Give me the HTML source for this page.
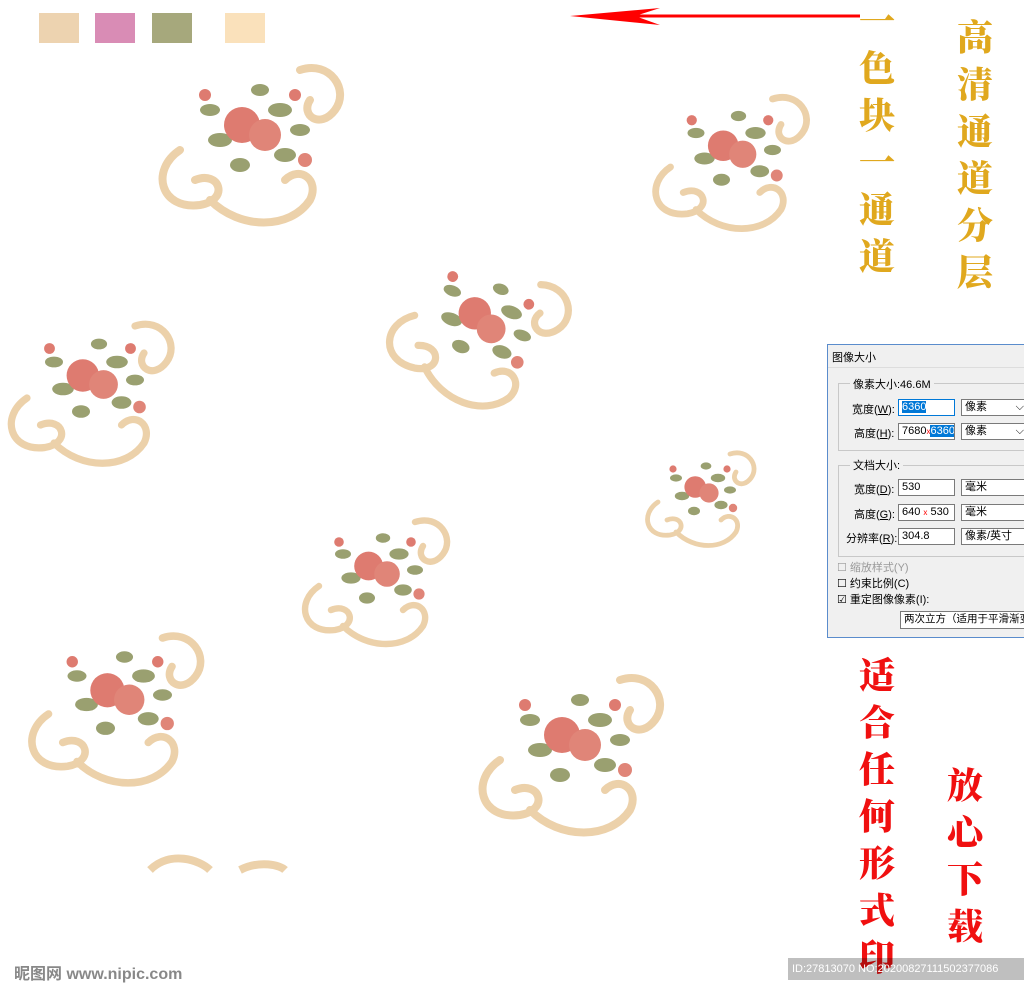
<!DOCTYPE html>
<html><head><meta charset="utf-8"><style>
body{margin:0;width:1024px;height:989px;background:#fff;position:relative;overflow:hidden;font-family:"Liberation Sans","Noto Sans CJK SC",sans-serif}
.a{position:absolute}
.sw{position:absolute;top:13px;width:40px;height:30px}
.vt{position:absolute;font-family:"Noto Serif CJK SC","Noto Sans CJK SC",serif;font-weight:900;font-size:36px;line-height:47px;width:40px;text-align:center}
.dlg{left:827px;top:344px;width:200px;height:292px;background:#f0f0f0;border:1px solid #5a8ccc;font-size:11px;color:#000;overflow:hidden}
.dlg .a{white-space:nowrap}
.box{position:absolute;background:#fff;border:1px solid #7a7a7a;height:17px;font-size:11px;line-height:15px;padding-left:3px;box-sizing:border-box;white-space:nowrap;overflow:hidden}
.sel{background:#0078d7;color:#fff}
.grp{position:absolute;border:1px solid #c8c8c8}
</style></head><body>
<div class="sw" style="left:39px;background:#edd3b0"></div>
<div class="sw" style="left:95px;background:#d98cb5"></div>
<div class="sw" style="left:152px;background:#a6a87c"></div>
<div class="sw" style="left:225px;background:#fae1bb"></div>
<svg class="a" style="left:565px;top:6px" width="300" height="20"><line x1="60" y1="10" x2="295" y2="10" stroke="#f00" stroke-width="3"/><path d="M5 10 L95 2 L70 10 L95 19 Z" fill="#f00"/></svg>

<svg width="0" height="0" style="position:absolute"><defs>
<g id="b">
<path d="M-70 20 C-100 40 -90 80 -50 75 C-20 70 -30 40 -55 50 M-40 70 C-10 100 40 100 60 70 C70 50 50 35 35 50 M50 -60 C80 -70 100 -40 85 -20 C70 0 50 -15 60 -30" fill="none" stroke="#ecd1aa" stroke-width="8" stroke-linecap="round"/>
<g fill="#9aa070"><ellipse cx="-30" cy="10" rx="12" ry="7"/><ellipse cx="30" cy="-20" rx="12" ry="7"/><ellipse cx="-10" cy="35" rx="10" ry="7"/><ellipse cx="35" cy="25" rx="11" ry="7"/><ellipse cx="-40" cy="-20" rx="10" ry="6"/><ellipse cx="10" cy="-40" rx="9" ry="6"/><ellipse cx="50" cy="0" rx="10" ry="6"/></g>
<circle cx="-8" cy="-5" r="18" fill="#de7b70"/><circle cx="15" cy="5" r="16" fill="#e08578"/><circle cx="-45" cy="-35" r="6" fill="#de7b70"/><circle cx="45" cy="-35" r="6" fill="#de7b70"/><circle cx="55" cy="30" r="7" fill="#e08578"/>
</g></defs></svg>
<svg class="a" style="left:0;top:0" width="820" height="989">
<use href="#b" transform="translate(250,130)"/>
<use href="#b" transform="translate(730,150) scale(.85)"/>
<use href="#b" transform="translate(480,320) scale(.9) rotate(20)"/>
<use href="#b" transform="translate(90,380) scale(.9)"/>
<use href="#b" transform="translate(700,490) scale(.6)"/>
<use href="#b" transform="translate(375,570) scale(.8)"/>
<use href="#b" transform="translate(115,695) scale(.95)"/>
<use href="#b" transform="translate(570,740)"/>
<path d="M150 870 C170 850 200 860 210 870 M240 870 C260 860 280 865 285 870" fill="none" stroke="#ecd1aa" stroke-width="8"/>
</svg>

<div class="vt" style="left:857px;top:-4px;color:#e0a81e">一<br>色<br>块<br>一<br>通<br>道</div>
<div class="vt" style="left:955px;top:12px;color:#e0a81e">高<br>清<br>通<br>道<br>分<br>层</div>
<div class="vt" style="left:857px;top:650px;color:#f01010">适<br>合<br>任<br>何<br>形<br>式<br>印</div>
<div class="vt" style="left:945px;top:760px;color:#f01010">放<br>心<br>下<br>载</div>

<div class="a dlg">
<div class="a" style="left:4px;top:4px">图像大小</div>
<div style="position:absolute;left:0;top:22px;width:200px;height:270px;background:#f0f0f0;border-top:1px solid #ddd"></div>
<div class="grp" style="left:10px;top:38px;width:200px;height:66px"></div>
<div class="a" style="left:22px;top:31px;background:#f0f0f0;padding:0 3px">像素大小:46.6M</div>
<div class="a" style="left:24px;top:56px">宽度(<u>W</u>):</div>
<div class="box" style="left:70px;top:54px;width:57px;border-color:#0078d7"><span class="sel">6360</span></div>
<div class="box" style="left:133px;top:54px;width:70px">像素 <span style="float:right;margin-right:6px">⌵</span></div>
<div class="a" style="left:26px;top:80px">高度(<u>H</u>):</div>
<div class="box" style="left:70px;top:78px;width:57px">7680<span style="color:red;font-size:8px">x</span><span class="sel">6360</span></div>
<div class="box" style="left:133px;top:78px;width:70px">像素 <span style="float:right;margin-right:6px">⌵</span></div>
<div class="grp" style="left:10px;top:120px;width:200px;height:90px"></div>
<div class="a" style="left:22px;top:112px;background:#f0f0f0;padding:0 3px">文档大小:</div>
<div class="a" style="left:26px;top:136px">宽度(<u>D</u>):</div>
<div class="box" style="left:70px;top:134px;width:57px">530</div>
<div class="box" style="left:133px;top:134px;width:70px">毫米</div>
<div class="a" style="left:26px;top:161px">高度(<u>G</u>):</div>
<div class="box" style="left:70px;top:159px;width:57px">640 <span style="color:red;font-size:8px">x</span> 530</div>
<div class="box" style="left:133px;top:159px;width:70px">毫米</div>
<div class="a" style="left:18px;top:185px">分辨率(<u>R</u>):</div>
<div class="box" style="left:70px;top:183px;width:57px">304.8</div>
<div class="box" style="left:133px;top:183px;width:70px">像素/英寸</div>
<div class="a" style="left:9px;top:214px;color:#999">☐ 缩放样式(Y)</div>
<div class="a" style="left:9px;top:230px">☐ 约束比例(C)</div>
<div class="a" style="left:9px;top:246px">☑ 重定图像像素(I):</div>
<div class="box" style="left:72px;top:266px;width:130px;height:18px;font-size:10.5px">两次立方（适用于平滑渐变</div>
</div>

<div class="a" style="left:14px;top:960px;font-size:16px;color:#888;font-weight:bold">昵图网 www.nipic.com</div>
<div class="a" style="left:788px;top:958px;width:236px;height:22px;background:rgba(0,0,0,.25);color:#fff;font-size:11px;line-height:22px;padding-left:4px">ID:27813070 NO:20200827111502377086</div>
</body></html>
